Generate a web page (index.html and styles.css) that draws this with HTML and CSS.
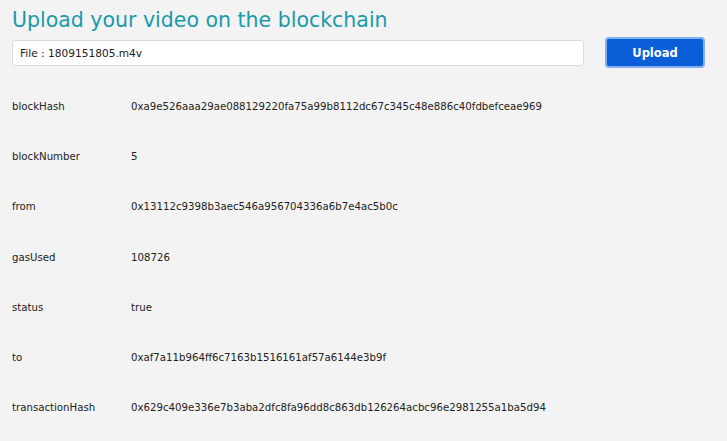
FILE: index.html
```html
<!DOCTYPE html>
<html>
<head>
<meta charset="utf-8">
<link rel="stylesheet" href="styles.css">
</head>
<body>
<div class="page">
  <h1 class="title">Upload your video on the blockchain</h1>
  <div class="upload-bar">
    <div class="file-input">File : 1809151805.m4v</div>
    <button class="upload-btn">Upload</button>
  </div>
  <div class="receipt">
    <div class="row"><span class="key">blockHash</span><span class="val">0xa9e526aaa29ae088129220fa75a99b8112dc67c345c48e886c40fdbefceae969</span></div>
    <div class="row"><span class="key">blockNumber</span><span class="val">5</span></div>
    <div class="row"><span class="key">from</span><span class="val">0x13112c9398b3aec546a956704336a6b7e4ac5b0c</span></div>
    <div class="row"><span class="key">gasUsed</span><span class="val">108726</span></div>
    <div class="row"><span class="key">status</span><span class="val">true</span></div>
    <div class="row"><span class="key">to</span><span class="val">0xaf7a11b964ff6c7163b1516161af57a6144e3b9f</span></div>
    <div class="row"><span class="key">transactionHash</span><span class="val">0x629c409e336e7b3aba2dfc8fa96dd8c863db126264acbc96e2981255a1ba5d94</span></div>
  </div>
</div>
</body>
</html>
```

FILE: styles.css
```css
html, body {
  margin: 0;
  padding: 0;
  background: #f3f3f3;
  height: 100%;
}
body {
  font-family: "DejaVu Sans", Verdana, sans-serif;
  color: #222;
}
.page {
  padding: 8px 22px 0 12px;
}
.title {
  margin: 0;
  font-family: "DejaVu Sans", sans-serif;
  font-weight: normal;
  font-size: 20.5px;
  line-height: 24px;
  color: #1a9aab;
}
.upload-bar {
  display: flex;
  align-items: center;
  gap: 21px;
  margin-top: 5px;
}
.file-input {
  flex: 1;
  height: 26px;
  box-sizing: border-box;
  background: #fff;
  border: 1px solid #dcdcdc;
  border-radius: 3px;
  padding: 0 7px;
  font-size: 10.6px;
  line-height: 24px;
  color: #222;
}
.upload-btn {
  width: 100px;
  height: 31px;
  box-sizing: border-box;
  background: #0a5fd8;
  border: 2px solid #7fb0f2;
  border-radius: 4px;
  color: #fff;
  font-family: "DejaVu Sans", sans-serif;
  font-weight: bold;
  font-size: 11.5px;
  padding: 0;
}
.receipt {
  margin-top: 13px;
  display: flex;
  flex-direction: column;
}
.row {
  display: flex;
  height: 50.3px;
  align-items: center;
  font-size: 10.2px;
  color: #222;
}
.key {
  width: 119px;
  flex-shrink: 0;
}
```
